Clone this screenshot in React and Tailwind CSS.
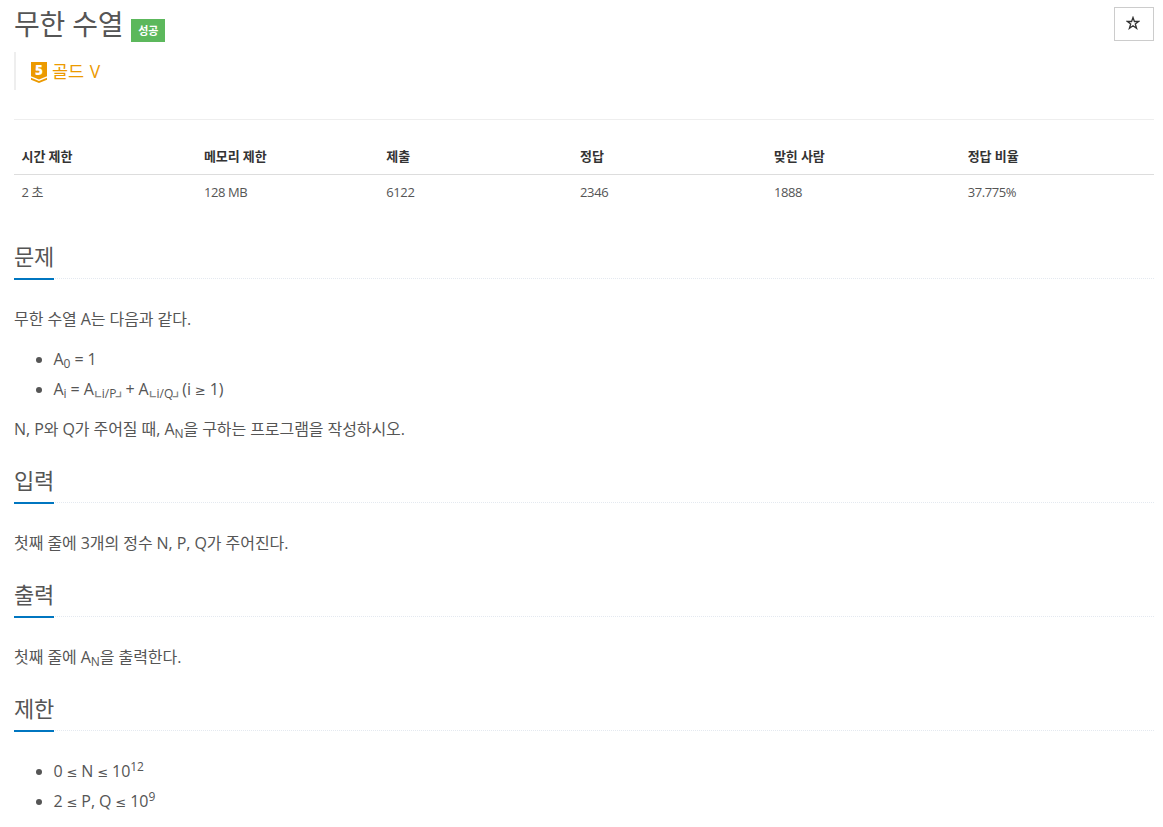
import React from 'react';

const stats = [
    { label: '시간 제한', value: '2 초', width: 'w-[182.4px]' },
    { label: '메모리 제한', value: '128 MB', width: 'w-[182.4px]' },
    { label: '제출', value: '6122', width: 'w-[193.8px]' },
    { label: '정답', value: '2346', width: 'w-[193.8px]' },
    { label: '맞힌 사람', value: '1888', width: 'w-[193.8px]' },
    { label: '정답 비율', value: '37.775%', width: 'w-[193.8px]' },
];

const TierBadge = () => (
    <svg width="16" height="21" viewBox="0 0 16 21" className="mt-[3px] shrink-0">
        <path d="M0 0H16V14.200L8 17.500L0 14.200Z" fill="#ec9a00" />
        <path d="M0 15.700L8 19L16 15.700V17.700L8 21L0 17.700Z" fill="#ec9a00" />
        <text x="8" y="13" textAnchor="middle" fontSize="13.500" fontWeight="800" fill="#fff">5</text>
    </svg>
);

// Relation sign with the wider advance of a CJK glyph
const Rel = ({ children }) => (
    <span className="inline-block w-[10.600px] text-center font-['DejaVu_Sans',sans-serif] text-[13px] leading-none">{children}</span>
);

const Floor = ({ children }) => (
    <sub>
        <span className="inline-flex w-[8px] justify-center align-[2px] font-['DejaVu_Sans',sans-serif] text-[19px] leading-[10px] text-[#888]">⌞</span>
        {children}
        <span className="inline-flex w-[5px] justify-center align-[2px] font-['DejaVu_Sans',sans-serif] text-[17px] leading-[10px] text-[#888]">⌟</span>
    </sub>
);

const Section = ({ title, children }) => (
    <section className="mb-[19px]">
        <div className="mb-[25px] border-b border-dotted border-[#e4e9f0]">
            <h2 className="-mb-[2px] inline-block h-[41px] border-b-2 border-[#0076c0] pt-px text-[22px] leading-[33px] tracking-[-0.200px] text-[#555] align-top">{title}</h2>
        </div>
        <div className="text-[16px] leading-[30px] tracking-[-0.070px]">{children}</div>
    </section>
);

const App = () => (
    <div className="h-[827px] overflow-hidden bg-white px-[14px] pr-[9px] font-['Open_Sans','Noto_Sans_CJK_KR',sans-serif] text-[13px] text-[#555]">
        <header className="flex h-[120px] justify-between border-b border-[#eee]">
            <div>
                <div className="flex h-[52px] items-start">
                    <h1 className="pt-[4px] text-[28px] leading-[40px] tracking-[-0.200px]">무한 수열</h1>
                    <span className="mt-[19px] ml-[8px] h-[23px] w-[34px] bg-[#5cb85c] text-center text-[11px] font-bold leading-[23px] text-white">성공</span>
                </div>
                <div className="flex h-[38px] items-center gap-[5px] border-l-2 border-[#eee] pl-[15px] text-[17.500px] text-[#ec9a00]">
                    <TierBadge />
                    <span className="pt-[1px] [word-spacing:1px]">골드 V</span>
                </div>
            </div>
            <button className="mt-[7px] flex h-[34px] w-[40px] items-center justify-center border border-[#ccc] pr-[2px] pb-[2px] text-[#333]">
                <svg width="14" height="14" viewBox="0 0 14 14" fill="none" stroke="currentColor" strokeWidth="1.300">
                    <path d="M7 1.500L8.400 5.500H12.700L9.300 8L10.600 12.300L7 9.700L3.400 12.300L4.700 8L1.300 5.500H5.600Z" />
                </svg>
            </button>
        </header>

        <table className="mt-[20px] mb-[29px] w-full table-fixed text-left">
            <thead>
                <tr className="h-[34px] border-b border-[#ddd]">
                    {stats.map((s) => (
                        <th key={s.label} className={`${s.width} pr-[8px] pb-[1px] pl-[7.500px] text-[13px] leading-[18px] font-bold tracking-[-0.070px] text-[#333]`}>{s.label}</th>
                    ))}
                </tr>
            </thead>
            <tbody>
                <tr className="h-[36px]">
                    {stats.map((s) => (
                        <td key={s.label} className="pr-[8px] pl-[7.500px] tracking-[-0.400px]">{s.value}</td>
                    ))}
                </tr>
            </tbody>
        </table>

        <Section title="문제">
            <p className="mb-[10px]">무한 수열 A는 다음과 같다.</p>
            <ul className="mb-[10px] list-disc pl-[39.500px]">
                <li>A<sub>0</sub> = 1</li>
                <li>A<sub>i</sub> = A<Floor>i/P</Floor> + A<Floor>i/Q</Floor> (i <Rel>≥</Rel> 1)</li>
            </ul>
            <p>N, P와 Q가 주어질 때, A<sub>N</sub>을 구하는 프로그램을 작성하시오.</p>
        </Section>
        <Section title="입력">
            <p>첫째 줄에 3개의 정수 N, P, Q가 주어진다.</p>
        </Section>
        <Section title="출력">
            <p>첫째 줄에 A<sub>N</sub>을 출력한다.</p>
        </Section>
        <Section title="제한">
            <ul className="list-disc pl-[39.500px]">
                <li>0 <Rel>≤</Rel> N <Rel>≤</Rel> 10<sup>12</sup></li>
                <li>2 <Rel>≤</Rel> P, Q <Rel>≤</Rel> 10<sup>9</sup></li>
            </ul>
        </Section>
    </div>
);

export default App;
